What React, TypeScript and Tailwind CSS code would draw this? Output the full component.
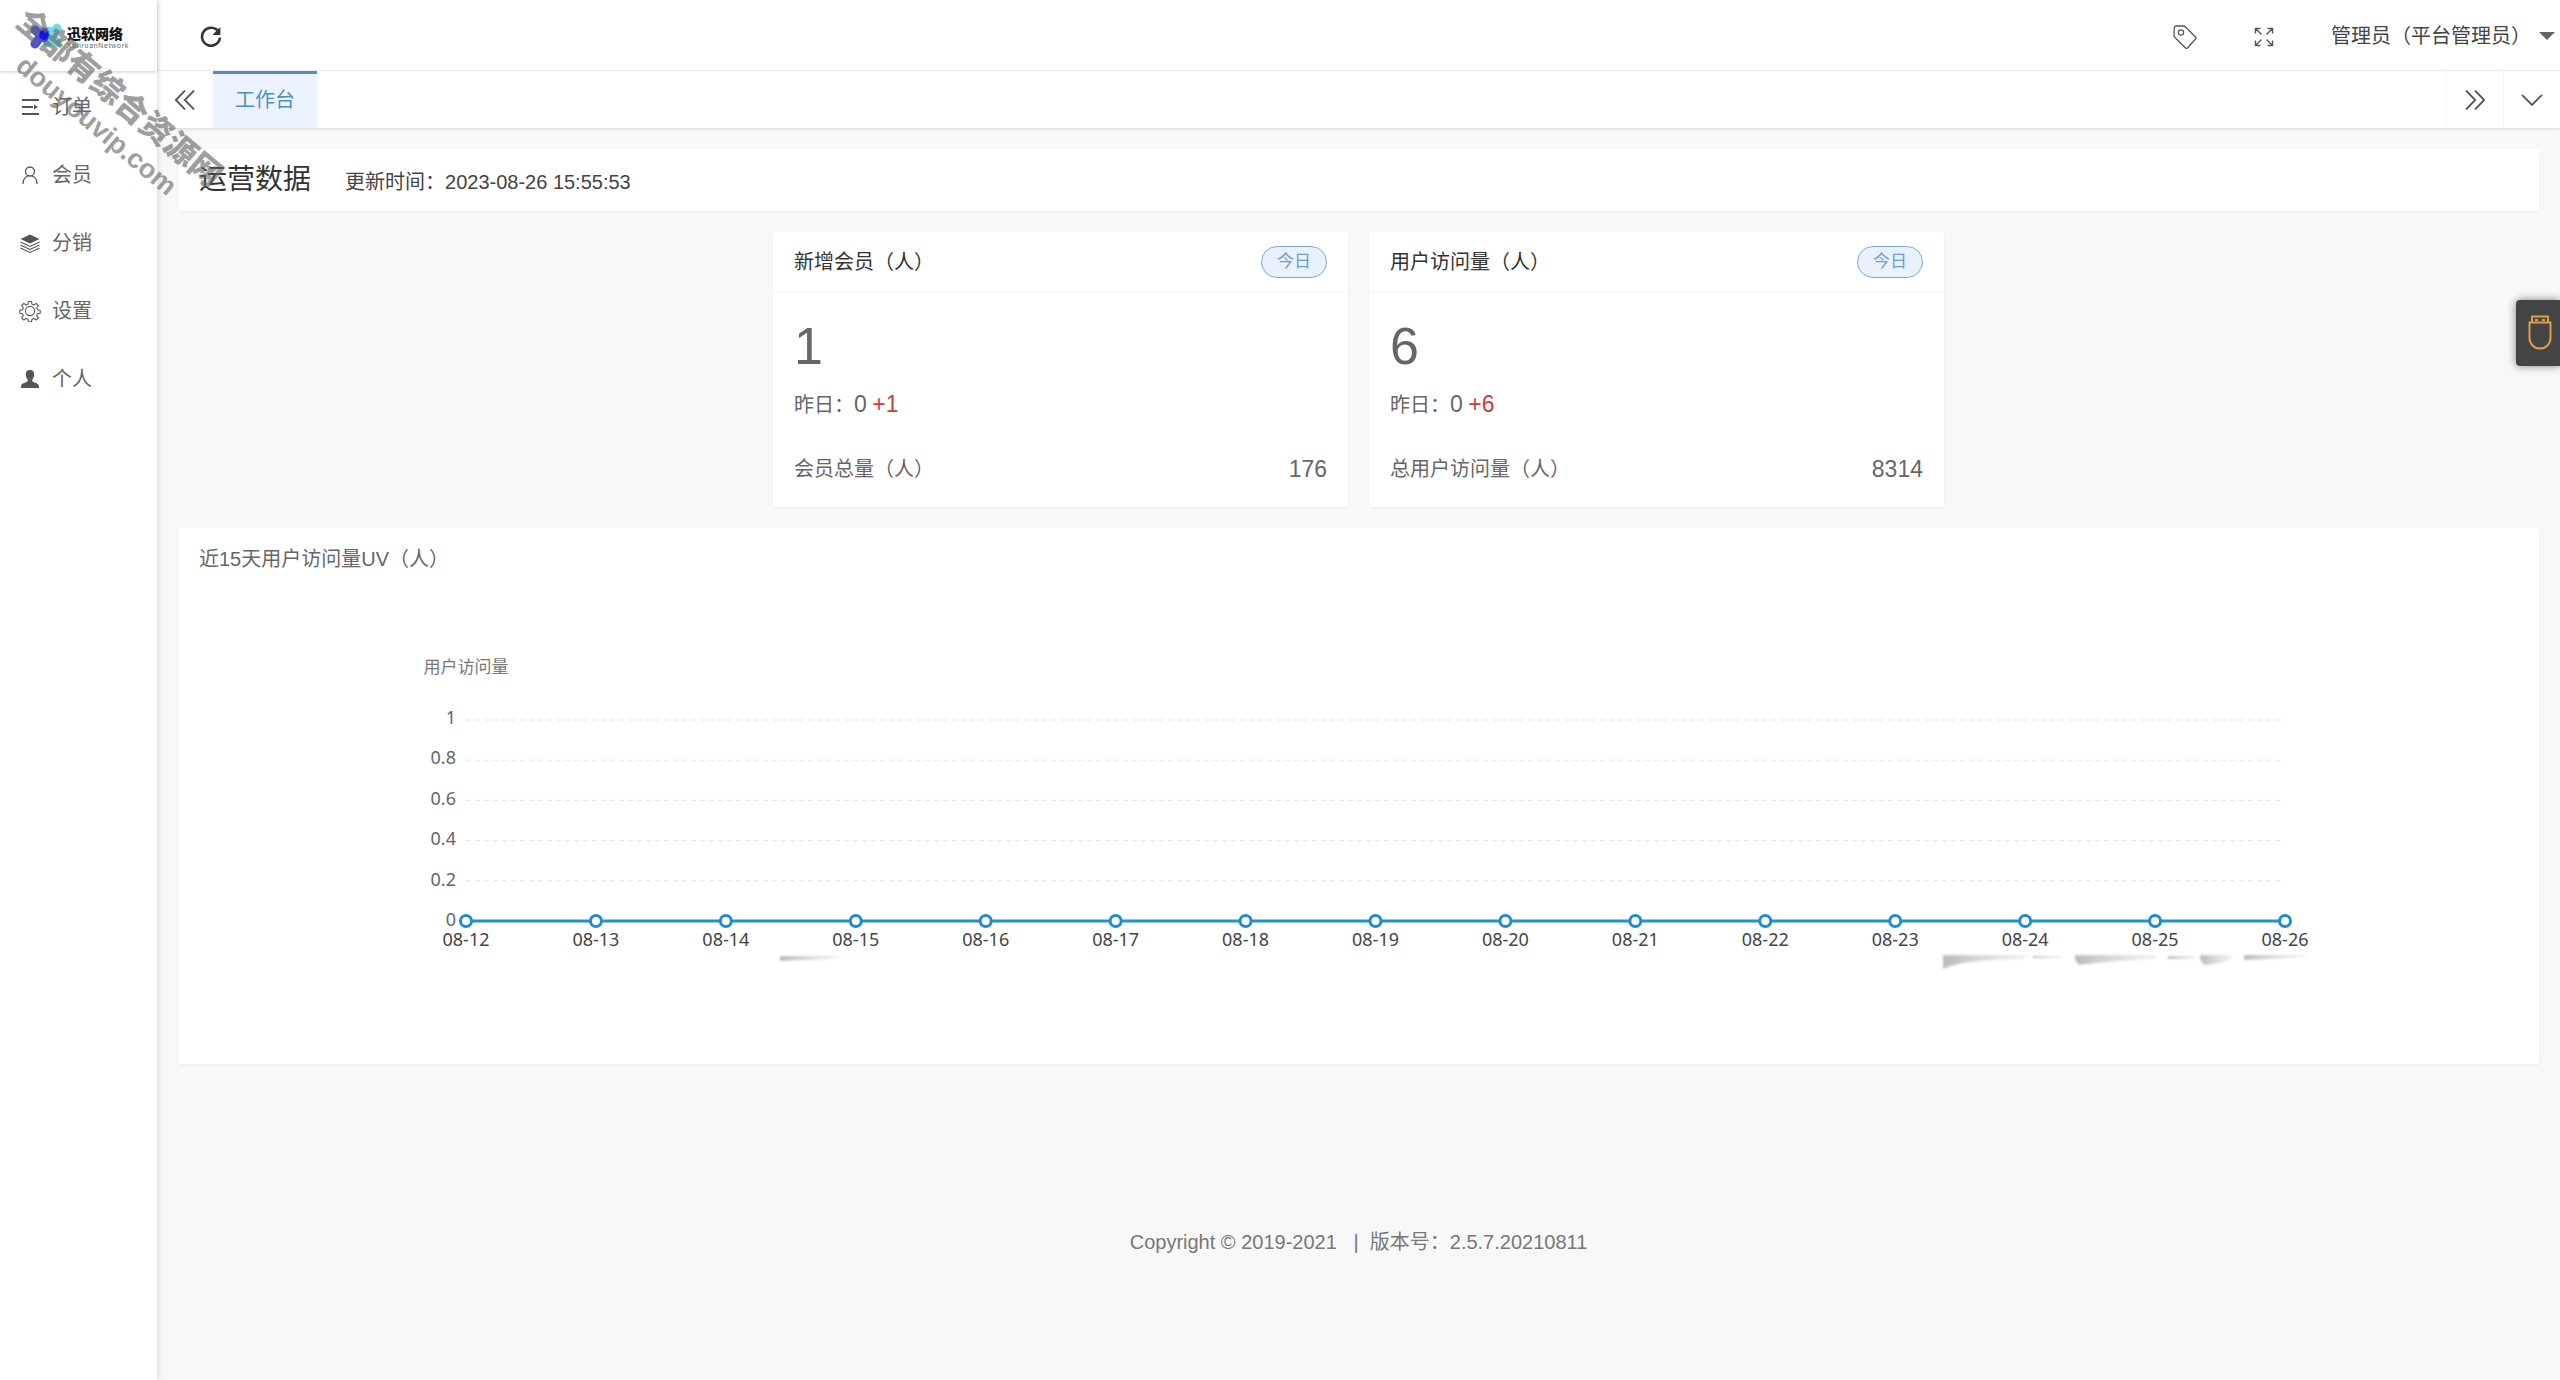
import { useState } from "react";
import type { ReactNode } from "react";

const MENU = [
  { id: "order", label: "订单", icon: <OrderIcon /> },
  { id: "member", label: "会员", icon: <MemberIcon /> },
  { id: "share", label: "分销", icon: <LayersIcon /> },
  { id: "setting", label: "设置", icon: <GearIcon /> },
  { id: "profile", label: "个人", icon: <ProfileIcon /> },
];

const STATS = [
  { id: "member", title: "新增会员（人）", value: 1, yesterday: 0, diff: "+1", totalLabel: "会员总量（人）", total: 176 },
  { id: "visit", title: "用户访问量（人）", value: 6, yesterday: 0, diff: "+6", totalLabel: "总用户访问量（人）", total: 8314 },
];

const DAYS = [
  "08-12", "08-13", "08-14", "08-15", "08-16", "08-17", "08-18", "08-19",
  "08-20", "08-21", "08-22", "08-23", "08-24", "08-25", "08-26",
];
const TICKS = ["1", "0.8", "0.6", "0.4", "0.2", "0"];

export default function App() {
  const [active, setActive] = useState("");

  return (
    <div className="relative flex min-h-screen overflow-hidden bg-[#f8f8f8] font-['Liberation_Sans','Noto_Sans_CJK_SC',sans-serif] text-[20px] leading-[30px] text-[#666]">
      <Sidebar active={active} onSelect={setActive} />
      <div className="flex min-w-0 flex-1 flex-col">
        <TopBar />
        <TabBar />
        <main className="flex flex-col gap-[21px] p-[21px]">
          <section className="flex h-[62px] items-center gap-[34px] rounded-xs bg-white px-[21px] shadow-[0_1px_3px_rgba(0,0,0,0.06)]">
            <h1 className="text-[28px] text-[#333]">运营数据</h1>
            <p className="pt-1 text-[#444]">更新时间：2023-08-26 15:55:53</p>
          </section>
          <section className="flex justify-center gap-[21px]">
            {STATS.map((s) => (
              <StatCard key={s.id} stat={s} />
            ))}
          </section>
          <VisitChart />
        </main>
        <footer className="pt-[142px] pb-10 text-center whitespace-pre text-[#777]">
          Copyright © 2019-2021   |  版本号：2.5.7.20210811
        </footer>
      </div>
      <button
        type="button"
        aria-label="USB"
        className="fixed top-[300px] right-0 flex h-[66px] w-[44px] items-center justify-center rounded-l-sm bg-[#444] pl-1 shadow-[0_0_8px_rgba(0,0,0,0.5)]"
      >
        <UsbIcon />
      </button>
      <Watermark />
    </div>
  );
}

function Sidebar({ active, onSelect }: { active: string; onSelect: (id: string) => void }) {
  return (
    <aside className="z-10 w-[157px] shrink-0 bg-white shadow-[1px_0_6px_rgba(0,0,0,0.14)]">
      <a href="#home" className="flex h-[71px] items-center gap-0.5 pl-[29px] shadow-[0_1px_3px_rgba(0,0,0,0.2)]">
        <Logo />
        <span className="flex flex-col pt-1 text-[#111]">
          <span className="text-[14px] leading-[15px] font-black">迅软网络</span>
          <span className="text-[7px] leading-[7px] tracking-widest whitespace-nowrap text-[#666]">XunruanNetwork</span>
        </span>
      </a>
      <nav className="pt-0.5">
        {MENU.map((m) => (
          <a
            key={m.id}
            href={`#${m.id}`}
            aria-current={active === m.id ? "page" : undefined}
            onClick={() => onSelect(m.id)}
            className="flex h-[68px] items-center gap-[11px] pl-[19px]"
          >
            {m.icon}
            {m.label}
          </a>
        ))}
      </nav>
    </aside>
  );
}

function TopBar() {
  return (
    <header className="flex h-[71px] items-center border-b border-[#f2f2f2] bg-white pt-1 pl-[43px] text-[#444]">
      <button type="button" aria-label="刷新">
        <svg width="22" height="22" viewBox="0 0 22 22" fill="none" stroke="#333" strokeWidth="2.6">
          <path d="M18.6 5.8A9 9 0 1 0 20 11.6" />
          <path d="M20.4 1v8h-8z" fill="#333" stroke="none" />
        </svg>
      </button>
      <div className="ml-auto flex items-center">
        <button type="button" aria-label="标签" className="mr-[57px]">
          <svg width="24" height="24" viewBox="0 0 24 24" fill="none" stroke="#555" strokeWidth="1.3" strokeLinejoin="round">
            <path d="M1 9.5 1.300 3Q1.500 1 3.500 1H10q1.500 0 2.500 1L22.500 12q1 1 0 2L14.500 23q-1 .8-2 0L2 12.500Q.8 11.500 1 9.500z" />
            <circle cx="8" cy="7.500" r="2.600" />
          </svg>
        </button>
        <button type="button" aria-label="全屏" className="mr-[57px]">
          <svg width="20" height="20" viewBox="0 0 20 20" fill="none" stroke="#555" strokeWidth="1.4">
            <path d="M1.500 6.500v-5h5M1.500 1.500l6 6M13.500 1.500h5v5M18.500 1.500l-6 6M1.500 13.500v5h5M1.500 18.500l6-6M18.500 13.500v5h-5M18.500 18.500l-6-6" />
          </svg>
        </button>
        <button type="button" className="flex items-center gap-2 pr-[5px] pb-[3px]">
          管理员（平台管理员）
          <svg width="16" height="8" viewBox="0 0 16 8" fill="#666">
            <path d="M0 0h16L8 8z" />
          </svg>
        </button>
      </div>
    </header>
  );
}

function TabBar() {
  return (
    <div className="flex h-[57px] bg-white shadow-[0_1px_3px_rgba(0,0,0,0.14)]">
      <button type="button" aria-label="向左" className="flex w-[56px] items-center justify-center">
        <svg width="20" height="20" viewBox="0 0 20 20" fill="none" stroke="#555" strokeWidth="1.8">
          <path d="M10 .5.8 10l9.200 9.500M19 .5 9.800 10l9.200 9.500" />
        </svg>
      </button>
      <button type="button" className="border-t-3 border-[#4a90c4] bg-[#edf3fe] px-[22px] pb-[3px] text-[#4a90c8]">
        工作台
      </button>
      <button type="button" aria-label="向右" className="ml-auto flex w-[57px] items-center justify-center border-l border-[#f4f4f4]">
        <svg width="20" height="20" viewBox="0 0 20 20" fill="none" stroke="#555" strokeWidth="1.8">
          <path d="M1 .5 10.200 10 1 19.500M10 .5l9.200 9.500-9.200 9.500" />
        </svg>
      </button>
      <button type="button" aria-label="更多" className="flex w-[57px] items-center justify-center border-l border-[#f4f4f4]">
        <svg width="22" height="12" viewBox="0 0 22 12" fill="none" stroke="#555" strokeWidth="1.8">
          <path d="M1 .8 11 11l10-10.200" />
        </svg>
      </button>
    </div>
  );
}

function StatCard({ stat }: { stat: (typeof STATS)[number] }) {
  return (
    <article className="h-[275px] w-[575px] rounded-xs bg-white shadow-[0_1px_3px_rgba(0,0,0,0.06)]">
      <div className="flex h-[61px] items-center justify-between border-b border-[#f6f6f6] px-[21px]">
        <h2 className="text-[#333]">{stat.title}</h2>
        <span className="flex h-8 w-[66px] items-center justify-center rounded-full border border-[#7fa9cf] bg-[#e9f2fc] text-[17px] text-[#6a9dcb]">
          今日
        </span>
      </div>
      <div className="px-[21px] pt-[21px]">
        <div className="text-[52px] leading-[64px]">{stat.value}</div>
        <div className="mt-[11px]">
          昨日：<span className="text-[23px]">{stat.yesterday}</span>{" "}
          <span className="text-[23px] text-[#cc3b3b]">{stat.diff}</span>
        </div>
        <div className="mt-[34px] flex items-center justify-between">
          <span>{stat.totalLabel}</span>
          <span className="text-[23px]">{stat.total}</span>
        </div>
      </div>
    </article>
  );
}

function VisitChart() {
  return (
    <section className="h-[536px] rounded-xs bg-white pt-4 shadow-[0_1px_3px_rgba(0,0,0,0.06)]">
      <h2 className="px-[21px]">近15天用户访问量UV（人）</h2>
      <div className="mt-[77px] mr-[254px] ml-[288px]">
        <svg className="block h-[330px] w-full overflow-visible font-['Noto_Sans','Noto_Sans_CJK_SC',sans-serif] text-[18px]" fill="#666">
          <text x="0" y="22" textAnchor="middle" className="text-[17px]" fill="#777">
            用户访问量
          </text>
          {TICKS.map((t, i) => (
            <g key={t}>
              <text x="-10" y={73 + i * 40.4} textAnchor="end">{t}</text>
              {t !== "0" && (
                <line x1="0" x2="100%" y1={69 + i * 40.2} y2={69 + i * 40.2} stroke="#e4e4e4" strokeDasharray="5 4" />
              )}
            </g>
          ))}
          <line x1="0" x2="100%" y1="270" y2="270" stroke="#2590cf" strokeWidth="3" />
          {DAYS.map((d, i) => {
            const x = `${(i / (DAYS.length - 1)) * 100}%`;
            return (
              <g key={d}>
                <circle cx={x} cy="270" r="5.5" fill="#fff" stroke="#1f8ccc" strokeWidth="3" />
                <text x={x} y="295" textAnchor="middle" fill="#444">{d}</text>
              </g>
            );
          })}
          <Smudges />
        </svg>
      </div>
    </section>
  );
}

// soft grey strokes under the axis
function Smudges() {
  return (
    <>
      <defs>
        <linearGradient id="smudge" x1="0" x2="1" y1="0" y2="0">
          <stop offset="0" stopColor="#bbb" />
          <stop offset="1" stopColor="#ddd" stopOpacity="0.4" />
        </linearGradient>
        <filter id="soft" x="-10%" y="-50%" width="120%" height="200%">
          <feGaussianBlur stdDeviation="0.8" />
        </filter>
      </defs>
      <svg x="17.2%" y="303" overflow="visible" fill="url(#smudge)" filter="url(#soft)">
        <path d="M1 2h66l-20 3L1 7z" />
      </svg>
      <svg x="81.2%" y="304" overflow="visible" fill="url(#smudge)" filter="url(#soft)">
        <path d="M0 0h86l-6 4Q20 4 0 14z" />
        <path d="M90 1h28v2H90z" />
        <path d="M132 0h82v4q-40 1-78 6l-4-5z" />
        <path d="M225 1h27v3h-27z" />
        <path d="M257 0h32v4l-12 4-16 2-4-6z" />
        <path d="M301 0h62v2l-62 3z" />
      </svg>
    </>
  );
}

function Watermark() {
  return (
    <div
      aria-hidden
      className="pointer-events-none absolute top-[76px] left-[-20px] z-20 w-[256px] rotate-40 text-center leading-[36px] font-bold whitespace-nowrap text-[#666]/65"
    >
      <div className="text-[32px] font-black">全部有综合资源网</div>
      <div className="text-[27px]">douyouvip.com</div>
    </div>
  );
}

function Logo() {
  return (
    <svg width="36" height="28" viewBox="0 0 36 28">
      <g strokeLinecap="round" strokeWidth="9">
        <path d="M19 21 28 6M20 9l8 12" stroke="#6fdbe6" />
        <path d="M6 22 15 10M6 8l9 8" stroke="#4a4fdc" />
      </g>
      <circle cx="15" cy="13" r="5" fill="#1414e0" />
    </svg>
  );
}

function MenuSvg({ children }: { children: ReactNode }) {
  return (
    <svg width="22" height="22" viewBox="0 0 22 22" fill="none" stroke="#555" strokeWidth="1.3" className="shrink-0">
      {children}
    </svg>
  );
}

function OrderIcon() {
  return (
    <MenuSvg>
      <path d="M3 4h17M3 11h11M3 18h17" strokeWidth="1.8" />
      <path d="M15 8.500 19 11l-4 2.500z" fill="#555" stroke="none" />
    </MenuSvg>
  );
}

function MemberIcon() {
  return (
    <MenuSvg>
      <circle cx="11" cy="7.500" r="4.500" />
      <path d="M4 20c0-4.500 2-7 5-8M18 20c0-4.500-2-7-5-8" />
    </MenuSvg>
  );
}

function LayersIcon() {
  return (
    <MenuSvg>
      <path d="M11 2.500 20.500 7 11 11.500 1.500 7z" fill="#555" stroke="none" />
      <path d="M1.500 10 11 14.500 20.500 10M1.500 13 11 17.500 20.500 13M1.500 16 11 20.500 20.500 16" strokeWidth="1.1" />
    </MenuSvg>
  );
}

function GearIcon() {
  return (
    <MenuSvg>
      <circle cx="11" cy="11" r="4.600" strokeWidth="1.1" />
      <path
        d="M9.500 1.500h3l.5 2.700 1.900.8 2.300-1.600 2.100 2.100-1.600 2.300.8 1.900 2.700.5v3l-2.700.5-.8 1.900 1.600 2.300-2.100 2.100-2.300-1.600-1.900.8-.5 2.700h-3L9 19.200l-1.900-.8L4.800 20l-2.100-2.100 1.600-2.300-.8-1.900L.8 13.200v-3l2.700-.5.8-1.900-1.600-2.300 2.100-2.100L7.100 5 9 4.200z"
        strokeWidth="1.1"
        strokeLinejoin="round"
      />
    </MenuSvg>
  );
}

function ProfileIcon() {
  return (
    <MenuSvg>
      <path
        d="M11 2c3 0 4.400 1.800 4.200 4.500-.1 2.500-1 4-1.900 5v1.800c1.500 1.500 6.700 1.700 6.700 5.200V20H2v-1.500c0-3.500 5.200-3.700 6.700-5.200v-1.800c-.9-1-1.800-2.500-1.900-5C6.600 3.800 8 2 11 2z"
        fill="#555"
        stroke="none"
      />
    </MenuSvg>
  );
}

function UsbIcon() {
  return (
    <svg width="24" height="36" viewBox="0 0 24 36" fill="none" stroke="#dda04a" strokeWidth="2">
      <path d="M4 7.500V1.500h16v6" />
      <path d="M1.500 7.500h21V23a10.500 10.500 0 0 1-21 0z" />
      <path d="M7 5h3M14 5h3" />
    </svg>
  );
}
